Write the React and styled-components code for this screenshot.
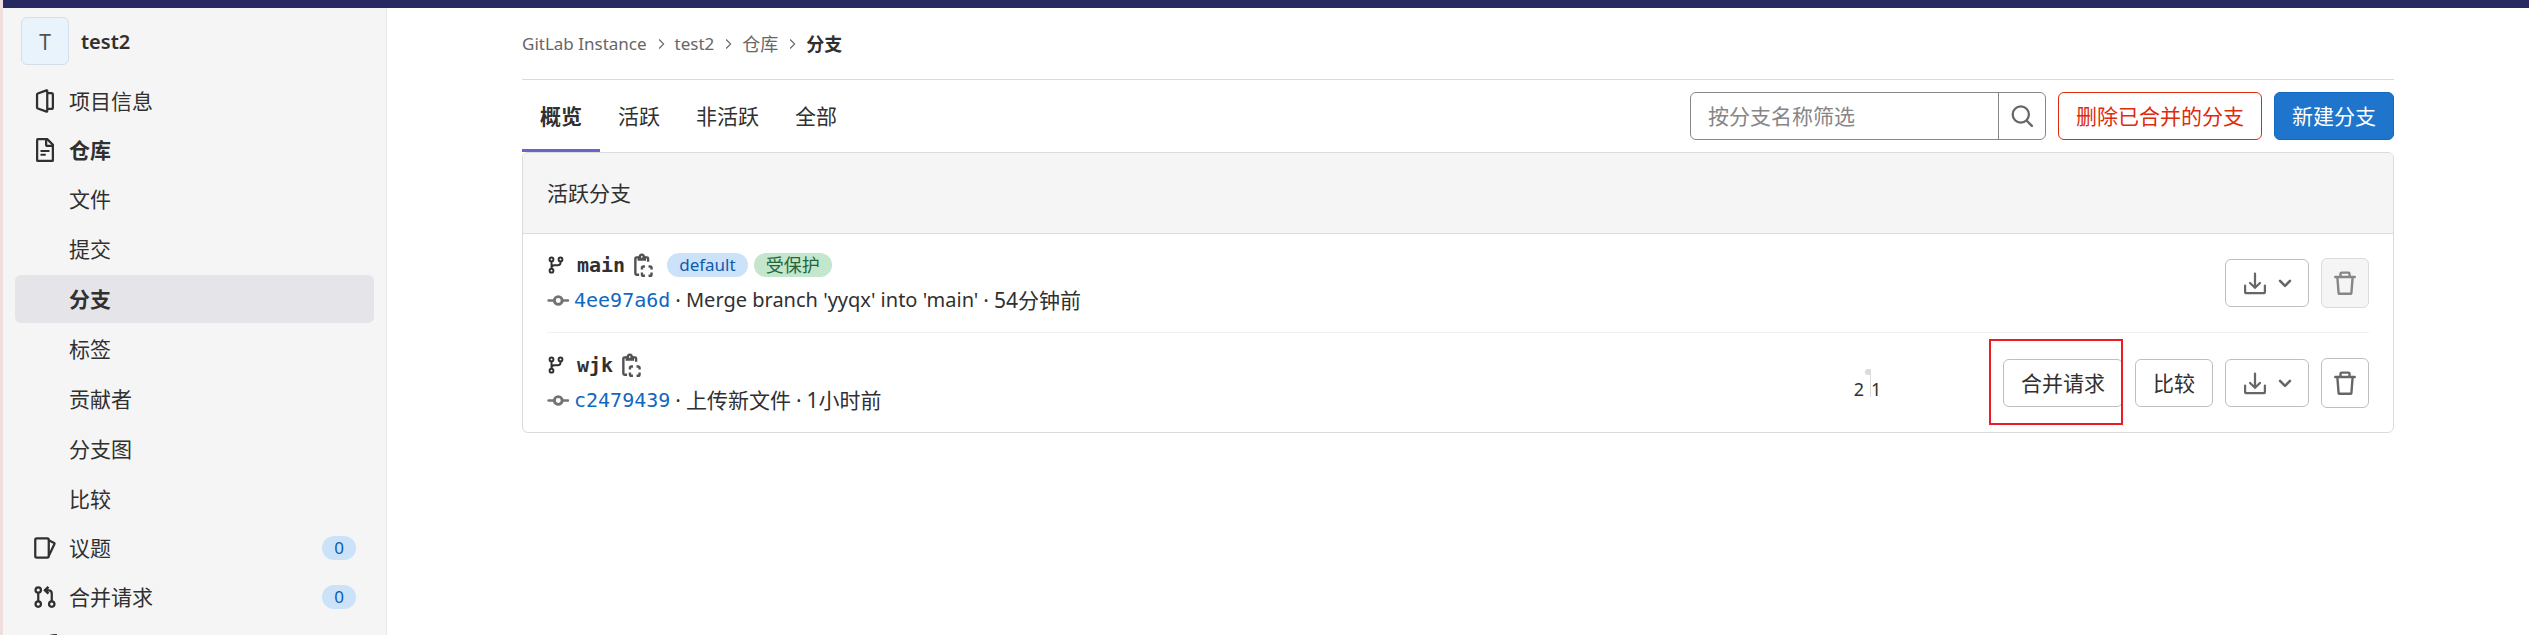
import React from "react";
import styled, { createGlobalStyle, css } from "styled-components";

const GlobalStyle = createGlobalStyle`
  * {
    box-sizing: border-box;
  }
  body {
    margin: 0;
    background: #fff;
    color: #303030;
    font-family: "Noto Sans", "Noto Sans CJK SC", sans-serif;
    font-size: 21px;
    line-height: 30px;
  }
  ul, ol, h1, h2, p {
    margin: 0;
    padding: 0;
    list-style: none;
    font-size: inherit;
    font-weight: inherit;
  }
  a {
    color: inherit;
    text-decoration: none;
  }
  button, input {
    font: inherit;
    color: inherit;
    margin: 0;
  }
`;

//Icons
const Icon = ({ size = 24, weight = 1.5, children }) => (
  <Svg
    viewBox="0 0 16 16"
    $size={size}
    fill="none"
    stroke="currentColor"
    strokeWidth={weight}
    aria-hidden="true"
  >
    {children}
  </Svg>
);

const ProjectIcon = () => (
  <Icon>
    <path d="M9 .9 3.200 3a.8.8 0 0 0-.5.7v8.600c0 .3.200.6.5.7L9 15.100a.4.4 0 0 0 .5-.4V1.300A.4.4 0 0 0 9 .9z" />
    <path d="M9.500 2.750h2.750a1 1 0 0 1 1 1v8.500a1 1 0 0 1-1 1H9.500" />
  </Icon>
);

const DocIcon = () => (
  <Icon>
    <path d="M3.250.750h6.250l3.750 3.750v10.250a.5.5 0 0 1-.5.5h-9.500a.5.5 0 0 1-.5-.5V1.250a.5.5 0 0 1 .5-.5z" />
    <path d="M8.750.750v3.500a1 1 0 0 0 1 1h3.500" />
    <path d="M5.500 8.600h5M5.500 11.200h2.500" strokeLinecap="round" strokeWidth="1.3" />
  </Icon>
);

const IssuesIcon = () => (
  <Icon weight={1.5}>
    <rect x="1.500" y="1.600" width="9" height="12.800" rx="1" />
    <path d="m10.500 2.800 3.600 1.800a.5.5 0 0 1 .2.7l-3.800 8" strokeLinejoin="round" />
  </Icon>
);

const MergeIcon = () => (
  <Icon>
    <circle cx="3.500" cy="3.300" r="1.800" />
    <circle cx="3.500" cy="12.700" r="1.800" />
    <circle cx="12.500" cy="12.700" r="1.800" />
    <path d="M3.500 5.100v5.800M12.500 10.900V5.500a2 2 0 0 0-2-2H8.500" />
    <path d="M10.300 1.200 8 3.500l2.300 2.300" strokeWidth="1.700" />
  </Icon>
);

const RocketIcon = () => (
  <Icon>
    <path d="M15.200.8c-4.200 0-7.400 1.600-9.700 5.200L2.500 6.500 1 9l2.500.5 3 3L7 15l2.500-1.500.5-3C13.600 8.200 15.200 5 15.200.8z" />
  </Icon>
);

const BranchIcon = () => (
  <Icon size={18} weight={1.700}>
    <circle cx="4" cy="3" r="1.700" />
    <circle cx="12" cy="3" r="1.700" />
    <circle cx="4" cy="13" r="1.700" />
    <path d="M4 4.600v6.800M12 4.600v1.100a2.500 2.500 0 0 1-2.500 2.500h-3A2.500 2.500 0 0 0 4 10.700" />
  </Icon>
);

const CopyIcon = () => (
  <Icon weight={1.600}>
    <path d="M5 2.900H3.700a.8.8 0 0 0-.8.8v10a.8.8 0 0 0 .8.8h1.700M9.500 2.900h1.100a.8.8 0 0 1 .8.8V5.800" />
    <path d="M5.200 4.400V2.900h.8a1.300 1.300 0 1 1 2.400 0h.8v1.500z" />
    <path d="M7.300 11V9.900a.9.9 0 0 1 .9-.9H9.300M11.700 9h1.100a.9.9 0 0 1 .9.9V11M13.700 13v1.300a.9.9 0 0 1-.9.9h-1.100M9.300 15.200H8.200a.9.9 0 0 1-.9-.9V13" />
  </Icon>
);

const CommitIcon = () => (
  <Icon weight={1.900}>
    <circle cx="7.500" cy="8.300" r="2.600" />
    <path d="M1 8.300h3.500M10.500 8.300H14" strokeLinecap="round" strokeWidth="1.600" />
  </Icon>
);

const DownloadIcon = () => (
  <Icon>
    <path d="M8 1.800v9M4.700 8 8 11.200 11.300 8" strokeLinecap="round" />
    <path d="M1.400 9.800v4a1 1 0 0 0 1 1h11.200a1 1 0 0 0 1-1v-4" strokeLinecap="round" />
  </Icon>
);

const ChevronIcon = () => (
  <Icon weight={1.700}>
    <path d="M4.700 6.600 8 9.900l3.300-3.300" strokeLinecap="round" strokeLinejoin="round" />
  </Icon>
);

const TrashIcon = () => (
  <Icon weight={1.600}>
    <path d="M1.500 4h13" strokeLinecap="round" />
    <path d="M5 4V1.900c0-.4.3-.8.8-.8h4.400c.5 0 .8.4.8.8V4" />
    <path d="m2.900 4 .8 10.300c0 .5.400.9.900.9h6.800c.5 0 .9-.4.900-.9L13.100 4" />
  </Icon>
);

const SearchIcon = () => (
  <Icon weight={1.500}>
    <circle cx="7.200" cy="7" r="5.400" />
    <path d="m11 11 3.600 3.600" strokeLinecap="round" strokeWidth="1.600" />
  </Icon>
);

const CrumbIcon = () => (
  <Icon size={12} weight={1.500}>
    <path d="m5.500 2 6 6-6 6" />
  </Icon>
);

const repoLinks = ["文件", "提交", "分支", "标签", "贡献者", "分支图", "比较"];
const crumbs = [
  { text: "GitLab Instance", latin: true },
  { text: "test2", latin: true },
  { text: "仓库" },
];
const tabs = ["概览", "活跃", "非活跃", "全部"];

const branches = [
  {
    name: "main",
    badges: [
      { text: "default", tone: "info", latin: true },
      { text: "受保护", tone: "success" },
    ],
    sha: "4ee97a6d",
    message: "Merge branch 'yyqx' into 'main'",
    latin: true,
    time: "54分钟前",
    isDefault: true,
  },
  {
    name: "wjk",
    badges: [],
    sha: "c2479439",
    message: "上传新文件",
    time: "1小时前",
    behind: 2,
    ahead: 1,
  },
];

const Sidebar = () => (
  <Aside>
    <Project href="#project">
      <Avatar>T</Avatar>
      <ProjectName>test2</ProjectName>
    </Project>
    <NavList>
      <li>
        <NavLink href="#info">
          <ProjectIcon />
          项目信息
        </NavLink>
      </li>
      <li>
        <NavLink href="#repository" $bold>
          <DocIcon />
          仓库
        </NavLink>
      </li>
      <li>
        <SubList>
          {repoLinks.map((text) => (
            <li key={text}>
              <NavLink href="#sub" $sub $bold={text === "分支"} $active={text === "分支"}>
                {text}
              </NavLink>
            </li>
          ))}
        </SubList>
      </li>
      <li>
        <NavLink href="#issues">
          <IssuesIcon />
          议题
          <Count>0</Count>
        </NavLink>
      </li>
      <li>
        <NavLink href="#merge-requests">
          <MergeIcon />
          合并请求
          <Count>0</Count>
        </NavLink>
      </li>
      <li>
        <NavLink href="#pipelines" aria-label="CI/CD">
          <RocketIcon />
        </NavLink>
      </li>
    </NavList>
  </Aside>
);

const BranchRow = ({ branch }) => (
  <Row>
    <Info>
      <NameLine>
        <BranchMark>
          <BranchIcon />
        </BranchMark>
        <BranchName href="#branch">{branch.name}</BranchName>
        <CopyButton aria-label="复制分支名称">
          <CopyIcon />
        </CopyButton>
        {branch.badges.map((badge) => (
          <Badge key={badge.text} $tone={badge.tone} $latin={badge.latin}>
            {badge.text}
          </Badge>
        ))}
      </NameLine>
      <CommitLine>
        <CommitMark>
          <CommitIcon />
        </CommitMark>
        <Sha href="#commit">{branch.sha}</Sha>
        <Dot>·</Dot>
        <Message href="#commit" $latin={branch.latin}>
          {branch.message}
        </Message>
        <Dot>·</Dot>
        <time>{branch.time}</time>
      </CommitLine>
    </Info>

    {!branch.isDefault && (
      <Graph>
        <Side $behind>
          <Bar />
          <span>{branch.behind}</span>
        </Side>
        <Separator />
        <Side>
          <span>{branch.ahead}</span>
        </Side>
      </Graph>
    )}

    <Actions>
      {!branch.isDefault && (
        <>
          <Marked>
            <Button>合并请求</Button>
          </Marked>
          <Button>比较</Button>
        </>
      )}
      <DropdownButton aria-label="下载">
        <DownloadIcon />
        <ChevronIcon />
      </DropdownButton>
      <IconButton aria-label="删除分支" disabled={branch.isDefault}>
        <TrashIcon />
      </IconButton>
    </Actions>
  </Row>
);

const App = () => {
  return (
    <>
      <GlobalStyle />
      <Page>
        <Edge />
        <Body>
          <TopBar />
          <Columns>
            <Sidebar />
            <Main>
              <Content>
                <Breadcrumbs aria-label="面包屑">
                  {crumbs.map(({ text, latin }) => (
                    <React.Fragment key={text}>
                      <Crumb href="#crumb" $latin={latin}>
                        {text}
                      </Crumb>
                      <CrumbIcon />
                    </React.Fragment>
                  ))}
                  <Current href="#branches">分支</Current>
                </Breadcrumbs>

                <Toolbar>
                  <Tabs>
                    {tabs.map((text, i) => (
                      <Tab key={text} href="#tab" $active={i === 0}>
                        {text}
                      </Tab>
                    ))}
                  </Tabs>
                  <Controls>
                    <SearchBox>
                      <SearchInput
                        type="text"
                        placeholder="按分支名称筛选"
                        aria-label="按分支名称筛选"
                      />
                      <SearchButton aria-label="搜索">
                        <SearchIcon />
                      </SearchButton>
                    </SearchBox>
                    <Button $variant="danger">删除已合并的分支</Button>
                    <Button $variant="confirm">新建分支</Button>
                  </Controls>
                </Toolbar>

                <Card>
                  <CardHeader>活跃分支</CardHeader>
                  <ul>
                    {branches.map((branch) => (
                      <BranchRow key={branch.name} branch={branch} />
                    ))}
                  </ul>
                </Card>
              </Content>
            </Main>
          </Columns>
        </Body>
      </Page>
    </>
  );
};

const Svg = styled.svg`
  display: block;
  flex: none;
  width: ${({ $size }) => $size}px;
  height: ${({ $size }) => $size}px;
`;

const Page = styled.div`
  display: flex;
  height: 100vh;
  overflow: hidden;
`;

const Edge = styled.div`
  flex: none;
  width: 3px;
  background: #f0dddd;
`;

const Body = styled.div`
  flex: 1;
  display: flex;
  flex-direction: column;
  min-width: 0;
`;

const TopBar = styled.header`
  flex: none;
  height: 8px;
  background: #292961;
`;

const Columns = styled.div`
  flex: 1;
  display: flex;
  min-height: 0;
`;

const Aside = styled.aside`
  flex: none;
  width: 384px;
  padding: 9px 12px 0;
  overflow: hidden;
  background: #f5f5f5;
  border-right: 1px solid #e9e9e9;
`;

const Project = styled.a`
  display: flex;
  align-items: center;
  gap: 12px;
  height: 48px;
  padding-left: 6px;
`;

const ProjectName = styled.span`
  padding-top: 2px;
  font-size: 20px;
  font-weight: 600;
`;

const Avatar = styled.span`
  display: flex;
  align-items: center;
  justify-content: center;
  width: 48px;
  height: 48px;
  border: 1px solid #d3dfea;
  border-radius: 6px;
  background: #e9f3fc;
  color: #525252;
  padding-top: 2px;
`;

const NavList = styled.ul`
  display: flex;
  flex-direction: column;
  gap: 1px;
  padding-top: 12px;
`;

const SubList = styled.ul`
  display: flex;
  flex-direction: column;
  gap: 2px;
`;

const NavLink = styled.a`
  display: flex;
  align-items: center;
  gap: 12px;
  height: 48px;
  padding: 0 18px;
  border-radius: 6px;
  ${({ $sub }) => $sub && "padding-left: 54px;"}
  ${({ $bold }) => $bold && "font-weight: 700;"}
  ${({ $active }) => $active && "background: #e5e4e9;"}
`;

const Count = styled.span`
  margin-left: auto;
  min-width: 34px;
  border-radius: 12px;
  background: #cbe2f9;
  color: #0b5cad;
  font-size: 17px;
  line-height: 24px;
  text-align: center;
`;

const Main = styled.main`
  flex: 1;
  min-width: 0;
`;

const Content = styled.div`
  max-width: 1920px;
  margin: 0 auto;
  padding: 0 24px;
`;

const Breadcrumbs = styled.nav`
  display: flex;
  align-items: center;
  gap: 8px;
  height: 72px;
  border-bottom: 1px solid #dbdbdb;
  color: #666;
`;

const Crumb = styled.a`
  font-size: ${({ $latin }) => ($latin ? 17 : 18)}px;
`;

const Current = styled(Crumb)`
  color: #303030;
  font-weight: 700;
`;

const Toolbar = styled.div`
  display: flex;
  justify-content: space-between;
`;

const Tabs = styled.nav`
  display: flex;
`;

const Tab = styled.a`
  height: 72px;
  padding: 21px 18px 0;
  ${({ $active }) =>
    $active &&
    css`
      font-weight: 700;
      box-shadow: inset 0 -3px 0 #6666c4;
    `}
`;

const Controls = styled.div`
  display: flex;
  align-items: center;
  gap: 12px;
`;

const SearchBox = styled.div`
  display: flex;
  width: 356px;
  height: 48px;
  border: 1px solid #868686;
  border-radius: 6px;
`;

const SearchInput = styled.input`
  flex: 1;
  min-width: 0;
  padding: 0 17px;
  border: 0;
  background: none;
  outline: none;
  &::placeholder {
    color: #868686;
    opacity: 1;
  }
`;

const SearchButton = styled.button`
  display: flex;
  align-items: center;
  justify-content: center;
  width: 47px;
  padding: 0;
  border: 0;
  border-left: 1px solid #868686;
  background: none;
  color: #666;
`;

const variants = {
  plain: "border-color: #bfbfbf; background: #fff; color: #303030;",
  danger: "border-color: #dd2b0e; background: #fff; color: #dd2b0e;",
  confirm: "border-color: #1068bf; background: #1f75cb; color: #fff;",
};

const Button = styled.button`
  display: flex;
  align-items: center;
  justify-content: center;
  height: 48px;
  padding: 0 17px;
  border: 1px solid;
  border-radius: 6px;
  white-space: nowrap;
  ${({ $variant = "plain" }) => variants[$variant]}
`;

const DropdownButton = styled(Button)`
  gap: 6px;
  padding: 0 11px 0 17px;
  color: #666;
`;

const IconButton = styled(Button)`
  width: 48px;
  height: 50px;
  padding: 0;
  color: #666;
  &:disabled {
    border-color: #dbdbdb;
    background: #f5f5f5;
    color: #868686;
  }
`;

const Card = styled.section`
  overflow: hidden;
  border: 1px solid #dbdbdb;
  border-radius: 6px;
`;

const CardHeader = styled.h2`
  padding: 25px 24px;
  border-bottom: 1px solid #dbdbdb;
  background: #f5f5f5;
`;

const Row = styled.li`
  display: flex;
  align-items: center;
  height: 99px;
  margin: 0 24px;
  &:not(:last-child) {
    border-bottom: 1px solid #f0f0f0;
  }
`;

const Info = styled.div`
  flex: 1;
  min-width: 0;
`;

const NameLine = styled.div`
  display: flex;
  align-items: center;
  gap: 6px;
  height: 34px;
`;

const BranchMark = styled.span`
  width: 24px;
`;

const BranchName = styled.a`
  font-family: "DejaVu Sans Mono", monospace;
  font-size: 20px;
  font-weight: 700;
`;

const CopyButton = styled.button`
  margin-right: 6px;
  padding: 0;
  border: 0;
  background: none;
  color: #525252;
`;

const Badge = styled.span`
  padding: 0 12px;
  border-radius: 12px;
  font-size: ${({ $latin }) => ($latin ? 17 : 18)}px;
  line-height: 24px;
  background: ${({ $tone }) => ($tone === "info" ? "#cbe2f9" : "#c3e6cd")};
  color: ${({ $tone }) => ($tone === "info" ? "#0b5cad" : "#24663b")};
`;

const CommitLine = styled.div`
  display: flex;
  align-items: center;
  height: 36px;
`;

const CommitMark = styled.span`
  width: 27px;
  color: #737373;
`;

const Sha = styled.a`
  color: #1068bf;
  font-family: "DejaVu Sans Mono", monospace;
  font-size: 20px;
`;

const Message = styled.a`
  font-size: ${({ $latin }) => ($latin ? 20 : 21)}px;
`;

const Dot = styled.span`
  padding: 0 5px;
`;

const Graph = styled.div`
  display: flex;
  width: 101px;
  height: 28px;
  margin-right: 82px;
  font-size: 18px;
  line-height: 24px;
`;

const Side = styled.div`
  flex: 1;
  display: flex;
  flex-direction: column;
  align-items: flex-start;
  padding-top: 8px;
  ${({ $behind }) =>
    $behind &&
    css`
      align-items: flex-end;
      gap: 2px;
      padding-top: 0;
      span {
        padding-right: 6px;
      }
    `}
`;

const Bar = styled.div`
  flex: none;
  width: 5px;
  height: 6px;
  border-radius: 3px 0 0 3px;
  background: #dbdbdb;
`;

const Separator = styled.div`
  width: 1px;
  background: #dbdbdb;
`;

const Actions = styled.div`
  display: flex;
  align-items: center;
  gap: 12px;
`;

const Marked = styled.div`
  position: relative;
  &::after {
    content: "";
    position: absolute;
    inset: -20px 0 -18px -14px;
    border: 2px solid #ed1c24;
    pointer-events: none;
  }
`;

export default App;
